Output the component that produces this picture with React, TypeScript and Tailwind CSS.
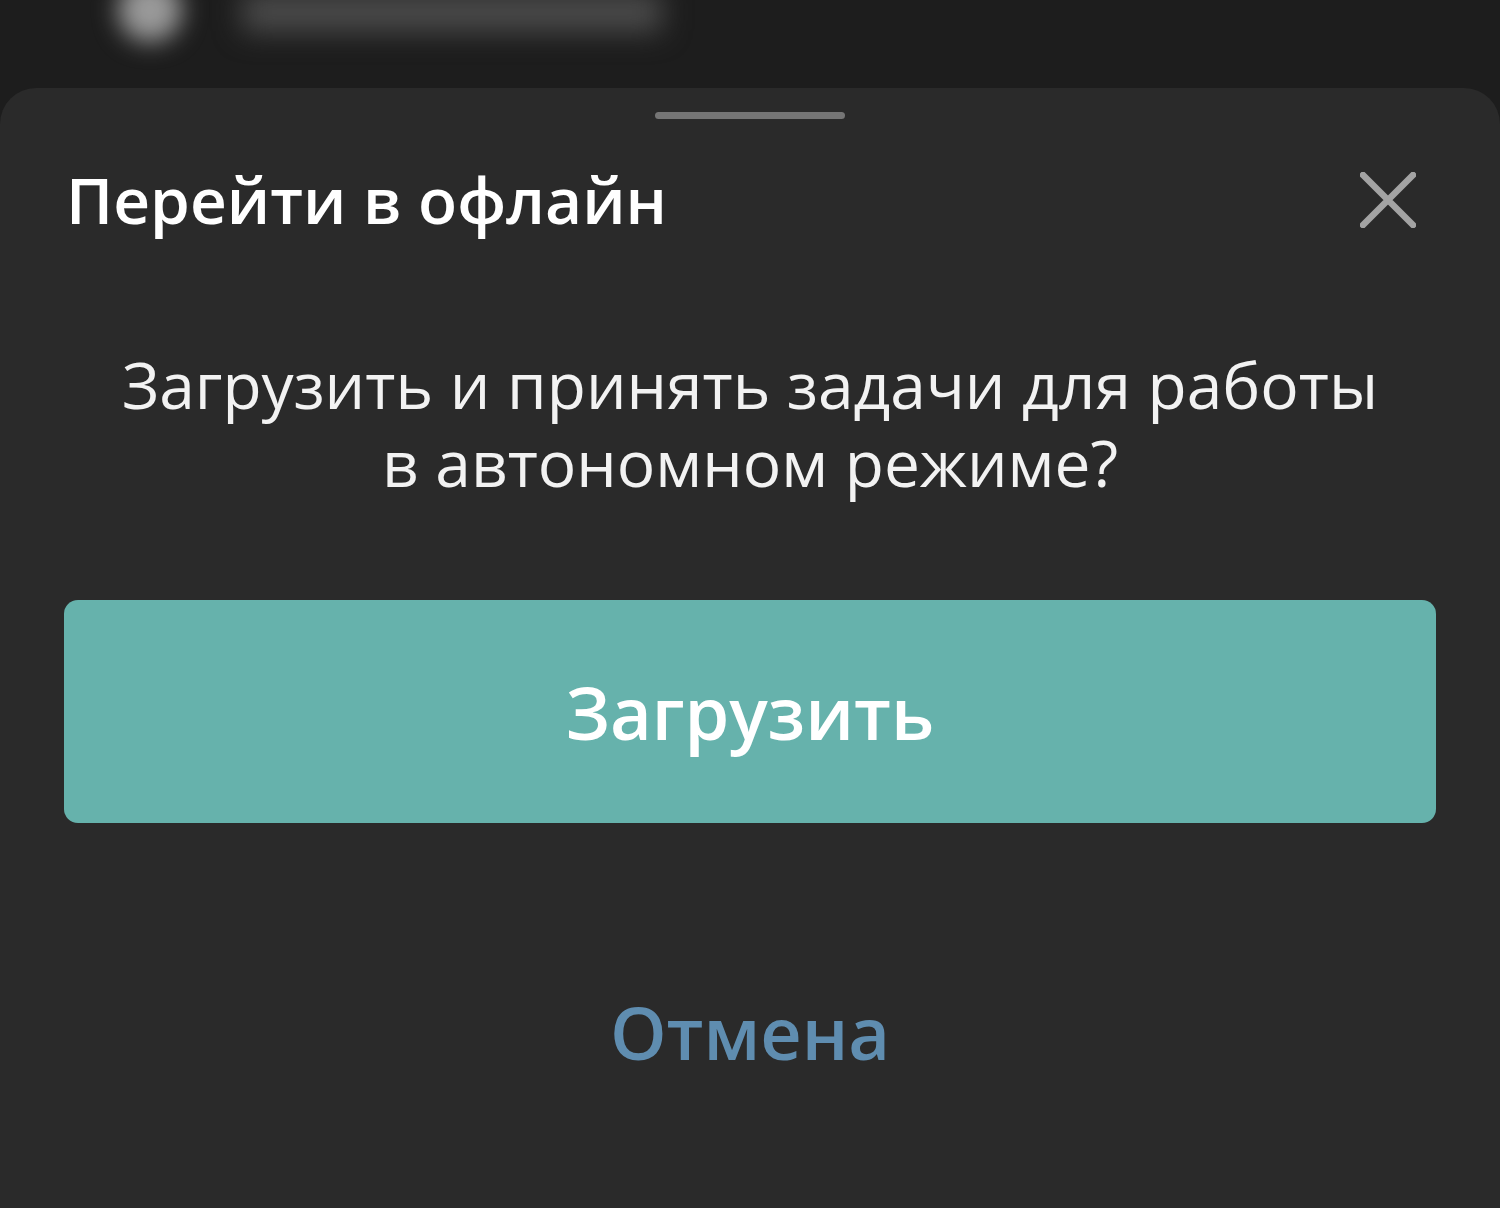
import React from 'react';

const CloseIcon = () => (
  <svg width="56" height="56" viewBox="0 0 56 56" fill="none">
    <path d="M3 3 L53 53 M53 3 L3 53" stroke="#a3a3a3" strokeWidth="6.5" strokeLinecap="round" />
  </svg>
);

export default function App() {
  return (
    <div className="w-[1500px] h-[1208px] bg-[#1d1d1d] flex flex-col overflow-hidden font-['Open_Sans',sans-serif]">
      {/* blurred list behind the sheet */}
      <div className="h-[88px] flex items-start pl-[118px] shrink-0">
        <div className="w-[64px] h-[64px] -mt-[22px] rounded-full bg-[#9a9a9a] blur-[12px]" />
        <div className="w-[420px] h-[40px] -mt-[8px] ml-[60px] rounded-md bg-[#4a4a4a] blur-[14px]" />
      </div>

      {/* bottom sheet */}
      <div className="flex-1 bg-[#2a2a2a] rounded-t-[36px] flex flex-col">
        <div className="mt-[24px] mx-auto w-[190px] h-[7px] rounded-full bg-[#757575]" />

        <div className="mt-[41px] flex items-center justify-between pl-[66px] pr-[84px]">
          <h2 className="text-[64px] leading-[80px] font-semibold text-white">Перейти в офлайн</h2>
          <CloseIcon />
        </div>

        <p className="mt-[106px] text-center text-[64px] leading-[78px] text-[#f2f2f2]">
          Загрузить и принять задачи для работы
          <br />
          в автономном режиме?
        </p>

        <button className="mt-[98px] mx-[64px] h-[223px] rounded-[14px] bg-[#66b2ac] text-white text-[72px] font-semibold">
          Загрузить
        </button>

        <button className="mt-[159px] mx-auto text-[72px] leading-[100px] font-semibold text-[#5f8db0]">
          Отмена
        </button>
      </div>
    </div>
  );
}
